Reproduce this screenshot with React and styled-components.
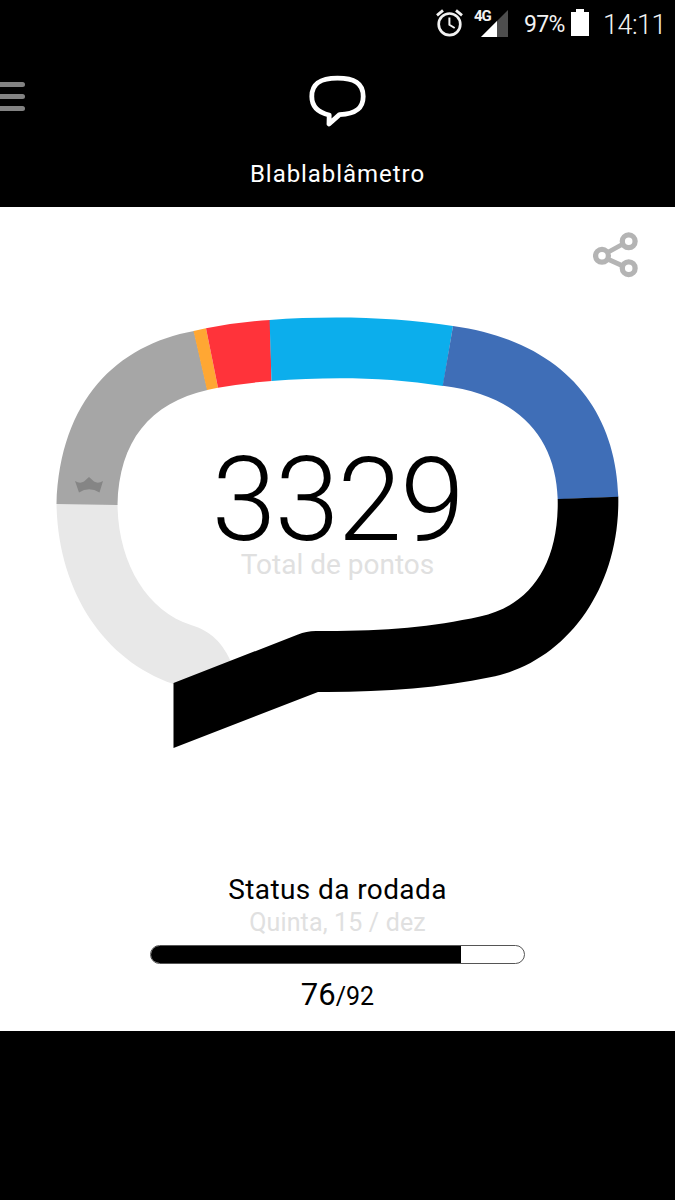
import React from "react";
import styled, { createGlobalStyle } from "styled-components";

const round = { done: 76, total: 92, progress: 83 };

//every slice of the speech bubble, clockwise from the crown
const slices = [
  {
    color: "#e8e8e8",
    d: "M56.5 504 C58 590 103 660 173.5 684 L232 664 C223 643 211 631 191 625 C147 611 118 563 117.5 504Z",
  },
  {
    color: "#a6a6a6",
    d: "M56.5 504 C60 400 117 345 194 331 L207.5 390 C150 403 119 441 117.5 505Z",
  },
  { color: "#ffa733", d: "M193.5 331 L206 328.2 L218 387.7 L207 390Z" },
  {
    color: "#ff333a",
    d: "M206 328.2 Q237 322 270 320 L271.5 381 Q245 383 218 387.7Z",
  },
  {
    color: "#0caeec",
    d: "M269.6 320 C330 315.6 395 317 453 326 L443 386 C386 377 330 376.5 271.5 381Z",
  },
  {
    color: "#3f6eb7",
    d: "M453 326 C562 341 616 408 618.3 497 L557.7 499.3 C556 439 520 395 442.7 385.8Z",
  },
  {
    color: "#000",
    d: "M618.3 496.7 C620 590 565 663 490 677.3 C440 688 380 692.5 318 692 L173.5 748 V683 L298 634.5 Q306 631 316 631 C380 631.5 430 627.5 480 616.5 C529 606 559 566 557.7 499Z",
  },
];

const AlarmIcon = () => (
  <svg width="27" height="28" viewBox="0 0 27 28" fill="none" stroke="#f2f2f2">
    <circle cx="13.5" cy="15.3" r="10.8" strokeWidth="2.7" />
    <path d="M13.4 8.5v7.3l5.3 3.2" strokeWidth="2" />
    <path d="M1 6.3l6-5M26 6.3l-6-5" strokeWidth="2.8" />
  </svg>
);

const SignalIcon = () => (
  <svg width="27" height="27" viewBox="0 0 27 27">
    <path d="M0 27L27 0V27Z" fill="#4d4d4d" />
    <path d="M0 27L16 11V27Z" fill="#fff" />
  </svg>
);

const BatteryIcon = () => (
  <svg width="18" height="27" viewBox="0 0 18 27" fill="#fff">
    <path d="M5 0h8v3h5v24H0V3h5z" />
  </svg>
);

const Logo = () => (
  <svg width="57" height="54" viewBox="0 0 57 54">
    <path
      d="M20.2 40C9 37.500 2.800 31 2.800 21.500C2.800 8 12 3.200 28.500 3.200S54.200 8 54.200 21.500C54.200 33 47 39 30.500 39.600L20 49Z"
      fill="none"
      stroke="#fff"
      strokeWidth="4.8"
      strokeLinejoin="round"
    />
  </svg>
);

const ShareIcon = () => (
  <svg width="46" height="46" viewBox="0 0 46 46" fill="none" stroke="#b4b4b4">
    <path d="M14.500 20.500L30 12M14.500 27L30 34" strokeWidth="4.8" />
    <circle cx="9" cy="23.8" r="6.400" strokeWidth="5.300" />
    <circle cx="35.7" cy="9.300" r="6.400" strokeWidth="5.300" />
    <circle cx="35.7" cy="36.200" r="6.400" strokeWidth="5.300" />
  </svg>
);

const App = () => {
  return (
    <Screen>
      <GlobalStyle />
      <StatusBar>
        <AlarmIcon />
        <Signal>
          <Network>4G</Network>
          <SignalIcon />
        </Signal>
        <Percent>97%</Percent>
        <BatteryIcon />
        <Clock>14:11</Clock>
      </StatusBar>

      <Header>
        <MenuButton aria-label="Menu">
          <MenuLine />
          <MenuLine />
          <MenuLine />
        </MenuButton>
        <Brand>
          <Logo />
          <Title>Blablablâmetro</Title>
        </Brand>
      </Header>

      <Main>
        <ShareButton aria-label="Compartilhar">
          <ShareIcon />
        </ShareButton>
        <Meter>
          <Bubble viewBox="50 310 575 445">
            {slices.map((slice) => (
              <path key={slice.color} d={slice.d} fill={slice.color} />
            ))}
            <path
              d="M75 481Q80 484 84 481.500L89 477L94 481.500Q98 484 103 481L99.500 492.500Q89 486 79 492.500Z"
              fill="#858585"
            />
          </Bubble>
          <Score>
            <Points>3329</Points>
            <Label>Total de pontos</Label>
          </Score>
        </Meter>
        <Status>
          <StatusTitle>Status da rodada</StatusTitle>
          <StatusDate>Quinta, 15 / dez</StatusDate>
          <Track>
            <Fill style={{ width: `${round.progress}%` }} />
          </Track>
          <Count>
            {round.done}
            <Total>/{round.total}</Total>
          </Count>
        </Status>
      </Main>
    </Screen>
  );
};

//styled components
const GlobalStyle = createGlobalStyle`
  * {
    box-sizing: border-box;
  }

  body {
    margin: 0;
    background-color: black;
    font-family: Roboto, "Liberation Sans", sans-serif;
  }

  svg {
    display: block;
    flex-shrink: 0;
  }
`;

const Screen = styled.div`
  display: flex;
  flex-direction: column;
  width: 675px;
  height: 1200px;
  overflow: hidden;
  background-color: black;
`;

const StatusBar = styled.div`
  display: flex;
  justify-content: flex-end;
  height: 47px;
  padding: 9px 10px 0 0;
  color: #f2f2f2;
`;

const Signal = styled.div`
  position: relative;
  margin: 1px 16px 0 18px;
`;

const Network = styled.span`
  position: absolute;
  top: -2px;
  left: -7px;
  font-size: 15px;
  line-height: 16px;
  font-weight: 700;
  letter-spacing: -1px;
`;

const Percent = styled.span`
  width: 42px;
  margin-right: 5px;
  font-size: 23px;
  line-height: 31px;
  letter-spacing: -0.7px;
  white-space: nowrap;
`;

const Clock = styled.span`
  width: 62px;
  margin-left: 14px;
  font-size: 27px;
  line-height: 32px;
  font-weight: 300;
  letter-spacing: -0.5px;
`;

const Header = styled.header`
  display: grid;
  grid-template-columns: 25px 1fr 25px;
  height: 160px;
  color: white;
`;

const MenuButton = styled.button`
  display: flex;
  flex-direction: column;
  gap: 7px;
  padding: 35px 0 0;
  border: none;
  background: none;
  cursor: pointer;
`;

const MenuLine = styled.span`
  width: 24.5px;
  height: 5px;
  border-radius: 0 3px 3px 0;
  background-color: #828282;
`;

const Brand = styled.div`
  display: flex;
  flex-direction: column;
  align-items: center;
  padding-top: 28px;
`;

const Title = styled.h1`
  margin: 30px 0 0;
  font-size: 24px;
  line-height: 30px;
  font-weight: 400;
  letter-spacing: 0.95px;
`;

const Main = styled.main`
  display: flex;
  flex-direction: column;
  align-items: center;
  height: 824px;
  background-color: white;
`;

const ShareButton = styled.button`
  align-self: flex-end;
  margin: 25px 36px 0 0;
  padding: 0;
  border: none;
  background: none;
  cursor: pointer;
`;

const Meter = styled.section`
  display: grid;
  width: 575px;
  height: 445px;
  margin-top: 32px;
`;

const Bubble = styled.svg`
  grid-area: 1 / 1;
  width: 575px;
  height: 445px;
`;

//sits in the same grid cell as the bubble
const Score = styled.div`
  grid-area: 1 / 1;
  display: flex;
  flex-direction: column;
  align-items: center;
  padding-top: 130px;
`;

const Points = styled.span`
  font-size: 116px;
  line-height: 120px;
  font-weight: 300;
  letter-spacing: -1.5px;
`;

const Label = styled.span`
  margin-top: -12px;
  font-size: 28px;
  line-height: 34px;
  color: #e0e0e0;
`;

const Status = styled.section`
  display: flex;
  flex-direction: column;
  align-items: center;
  margin-top: 118px;
`;

const StatusTitle = styled.h2`
  margin: 0;
  font-size: 28px;
  line-height: 34px;
  font-weight: 400;
  letter-spacing: 0.4px;
`;

const StatusDate = styled.span`
  font-size: 25px;
  line-height: 32px;
  letter-spacing: 0.15px;
  color: #e0e0e0;
`;

const Track = styled.div`
  width: 375px;
  height: 19px;
  margin-top: 6px;
  border: 1px solid #555;
  border-radius: 10px;
  overflow: hidden;
`;

const Fill = styled.div`
  height: 100%;
  background-color: black;
`;

const Count = styled.p`
  margin: 12px 0 0;
  font-size: 31px;
  line-height: 38px;
`;

const Total = styled.span`
  font-size: 25px;
`;

export default App;
